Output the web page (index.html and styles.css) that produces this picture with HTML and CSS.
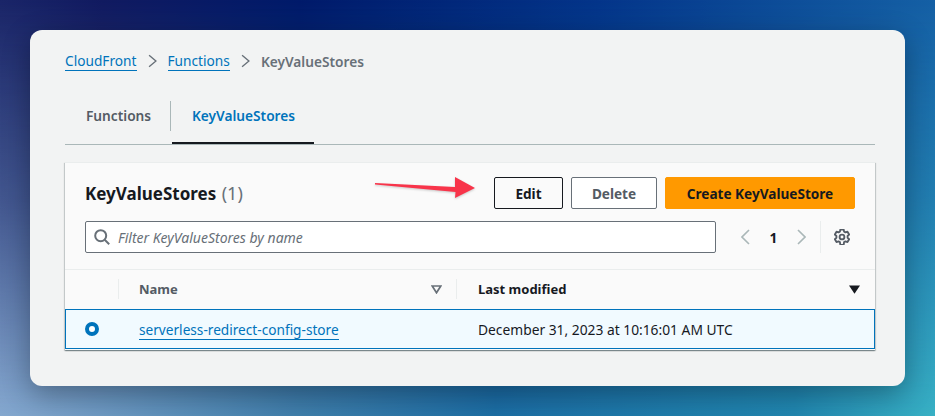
FILE: index.html
```html
<!DOCTYPE html>
<html lang="en">
<head>
<meta charset="utf-8">
<title>KeyValueStores</title>
<link rel="stylesheet" href="styles.css">
</head>
<body>
<main class="card">
  <nav class="crumbs">
    <a class="link" href="#">CloudFront</a>
    <svg class="crumb-sep" viewBox="0 0 10 15"><path d="M1.200 1 8.800 7.500 1.200 14"/></svg>
    <a class="link" href="#">Functions</a>
    <svg class="crumb-sep" viewBox="0 0 10 15"><path d="M1.200 1 8.800 7.500 1.200 14"/></svg>
    <span class="crumb-current">KeyValueStores</span>
  </nav>
  <div class="tabs">
    <div class="tab">Functions</div>
    <div class="tab tab-active"><span>KeyValueStores</span></div>
  </div>
  <section class="panel">
    <div class="head">
      <h1 class="title">KeyValueStores <span class="count">(1)</span></h1>
      <div class="actions">
        <button class="btn btn-edit">Edit</button>
        <button class="btn btn-delete">Delete</button>
        <button class="btn btn-primary">Create KeyValueStore</button>
      </div>
    </div>
    <div class="tools">
      <div class="search">
        <svg class="search-icon" viewBox="0 0 16 16"><circle cx="6.700" cy="6.700" r="5.500"/><path d="m10.700 10.700 4.500 4.500"/></svg>
        <span class="placeholder">Filter KeyValueStores by name</span>
      </div>
      <div class="pager">
        <svg class="page-arrow" viewBox="0 0 9 16"><path d="M8 1 1 8l7 7"/></svg>
        <span class="page-num">1</span>
        <svg class="page-arrow" viewBox="0 0 9 16"><path d="M1 1l7 7-7 7"/></svg>
      </div>
      <div class="settings">
        <svg class="gear" viewBox="0.700 0.500 14.600 14.600"><path d="M6.500 1h3l.4 1.900 1.300.7 1.800-.6 1.500 2.600-1.400 1.300v1.600l1.400 1.300L13 12.400l-1.800-.6-1.300.7-.4 2.500h-3l-.4-2.500-1.300-.7-1.800.6L1.500 9.800l1.400-1.300V6.900L1.500 5.600 3 3l1.800.6 1.300-.7z" stroke-linejoin="round"/><circle cx="8" cy="7.800" r="2.200"/></svg>
      </div>
    </div>
    <div class="table">
      <div class="row-head">
        <div class="cell-select"></div>
        <div class="th th-name">Name
          <svg class="sort" viewBox="0 0 11 9"><path d="M1.200 1h8.600L5.500 7.800z"/></svg>
        </div>
        <div class="th th-date">Last modified
          <svg class="sort-on" viewBox="0 0 11 9"><path d="M0 .5h11L5.500 8.800z"/></svg>
        </div>
      </div>
      <div class="row-sel">
        <div class="cell-select"><span class="radio"></span></div>
        <div class="td td-name"><a class="link" href="#">serverless-redirect-config-store</a></div>
        <div class="td td-date">December 31, 2023 at 10:16:01 AM UTC</div>
      </div>
    </div>
  </section>
</main>
<svg class="arrow" viewBox="0 0 100 21"><path d="M0 6 80 10 80 0 100 11 80 21 80.500 15 0 7.500z"/></svg>
</body>
</html>
```
FILE: styles.css
```css
* { box-sizing: border-box; }
html, body { height: 100%; }
body {
  margin: 0;
  width: 935px;
  height: 416px;
  overflow: hidden;
  padding: 30px;
  position: relative;
  font-family: "Noto Sans", "Open Sans", sans-serif;
  font-size: 13.700px;
  color: #16191f;
  background: linear-gradient(90deg, #1a2568 0%, #111a60 11%, #001a6a 32%, #04358a 64%, #1560a5 100%);
}
body::before {
  content: "";
  position: absolute;
  inset: 0;
  z-index: -1;
  background: linear-gradient(90deg, #85a8cf 0%, #3f7fab 32%, #1c6ea4 53%, #2187af 85%, #38b0c4 100%);
  -webkit-mask-image: linear-gradient(180deg, transparent 0%, rgba(0,0,0,.38) 48%, #000 100%);
  mask-image: linear-gradient(180deg, transparent 0%, rgba(0,0,0,.38) 48%, #000 100%);
}
.card {
  width: 875px;
  height: 356px;
  background: #f2f3f3;
  border-radius: 12px;
  padding: 20px 30px 0 35px;
  box-shadow: 0 8px 28px rgba(0,0,0,.3);
}
.link { color: #0073bb; text-decoration: none; border-bottom: 1px solid #0073bb; }
.crumbs { display: flex; align-items: center; height: 22px; }
.crumbs .link { line-height: 18px; }
.crumb-sep { width: 9px; height: 14px; margin: 0 11px; fill: none; stroke: #687078; stroke-width: 1.500; }
.crumb-current { color: #687078; font-weight: 600; }
.tabs {
  display: flex;
  align-items: flex-start;
  height: 62px;
  margin-top: 11px;
  margin-bottom: 17px;
  padding-top: 18px;
  border-bottom: 1px solid #aab7b8;
  position: relative;
}
.tab { width: 105px; padding-left: 21px; font-weight: 600; color: #545b64; line-height: 30px; }
.tab-active { width: auto; color: #0073bb; border-left: 1px solid #aab7b8; }
.tab-active::after {
  content: "";
  position: absolute;
  left: 107px;
  bottom: 0;
  width: 142px;
  height: 2px;
  background: #16191f;
}
.panel {
  height: 188px;
  background: #fafafa;
  box-shadow: 0 1px 1px rgba(0,28,36,.3), 1px 1px 1px rgba(0,28,36,.15), -1px 1px 1px rgba(0,28,36,.15);
  border-top: 1px solid #eaeded;
}
.head { display: flex; justify-content: space-between; align-items: center; padding: 14px 20px 0; height: 46px; }
.title { margin: 0; font-size: 17px; font-weight: 700; }
.count { font-weight: 400; color: #687078; font-size: 18px; margin-left: 1px; }
.actions { display: flex; gap: 8px; }
.btn {
  height: 32px;
  border-radius: 2px;
  font-family: inherit;
  font-size: 13.600px;
  font-weight: 700;
  padding: 0;
  background: #fff;
}
.btn-edit { width: 69px; border: 1px solid #16191f; color: #16191f; background: #fafafa; }
.btn-delete { width: 86px; border: 1px solid #687078; color: #545b64; }
.btn-primary { width: 190px; border: 1px solid #ff9900; background: #ff9900; color: #16191f; }
.tools { display: flex; align-items: center; padding: 12px 20px 0; height: 44px; }
.search {
  width: 631px;
  height: 32px;
  background: #fff;
  border: 1px solid #687078;
  border-radius: 2px;
  display: flex;
  align-items: center;
  padding-left: 8px;
  gap: 8px;
}
.search-icon { width: 16px; height: 16px; fill: none; stroke: #687078; stroke-width: 2; }
.placeholder { font-style: italic; color: #687078; font-size: 14px; }
.pager { display: flex; align-items: center; margin-left: 25px; width: 65px; justify-content: space-between; }
.page-arrow { width: 9px; height: 16px; fill: none; stroke: #aab7b8; stroke-width: 1.600; }
.page-num { font-weight: 700; }
.settings {
  margin-left: 14px;
  height: 32px;
  border-left: 1px solid #eaeded;
  padding-left: 13px;
  display: flex;
  align-items: center;
}
.gear { width: 16px; height: 16px; fill: none; stroke: #545b64; stroke-width: 1.700; }
.table { margin-top: 16px; border-top: 1px solid #eaeded; }
.row-head, .row-sel { display: grid; grid-template-columns: 53px 338px 1fr; align-items: center; }
.row-head { height: 39px; padding-bottom: 1px; }
.cell-select { display: flex; align-items: center; padding-left: 20px; height: 100%; }
.th { display: flex; align-items: center; justify-content: space-between; font-size: 13px; font-weight: 700; height: 20px; padding-left: 20px; padding-right: 14px; border-left: 1px solid #eaeded; }
.th-name { color: #545b64; }
.th-date { color: #16191f; padding-left: 21px; padding-right: 15px; }
.sort { width: 11px; height: 9px; fill: none; stroke: #687078; stroke-width: 1.700; }
.sort-on { width: 11px; height: 9px; fill: #16191f; }
.row-sel { height: 40px; background: #f1faff; border: 1px solid #0073bb; }
.radio { width: 14px; height: 14px; border-radius: 50%; border: 4px solid #0073bb; background: #fff; margin-left: -1px; }
.td-name { padding-left: 20px; font-size: 13.650px; }
.td-date { padding-left: 21px; font-size: 13.800px; }
.arrow { position: absolute; left: 375px; top: 177px; width: 100px; height: 21px; fill: #f8344a; filter: drop-shadow(0 1px 1px rgba(0,0,0,.2)); }
```
